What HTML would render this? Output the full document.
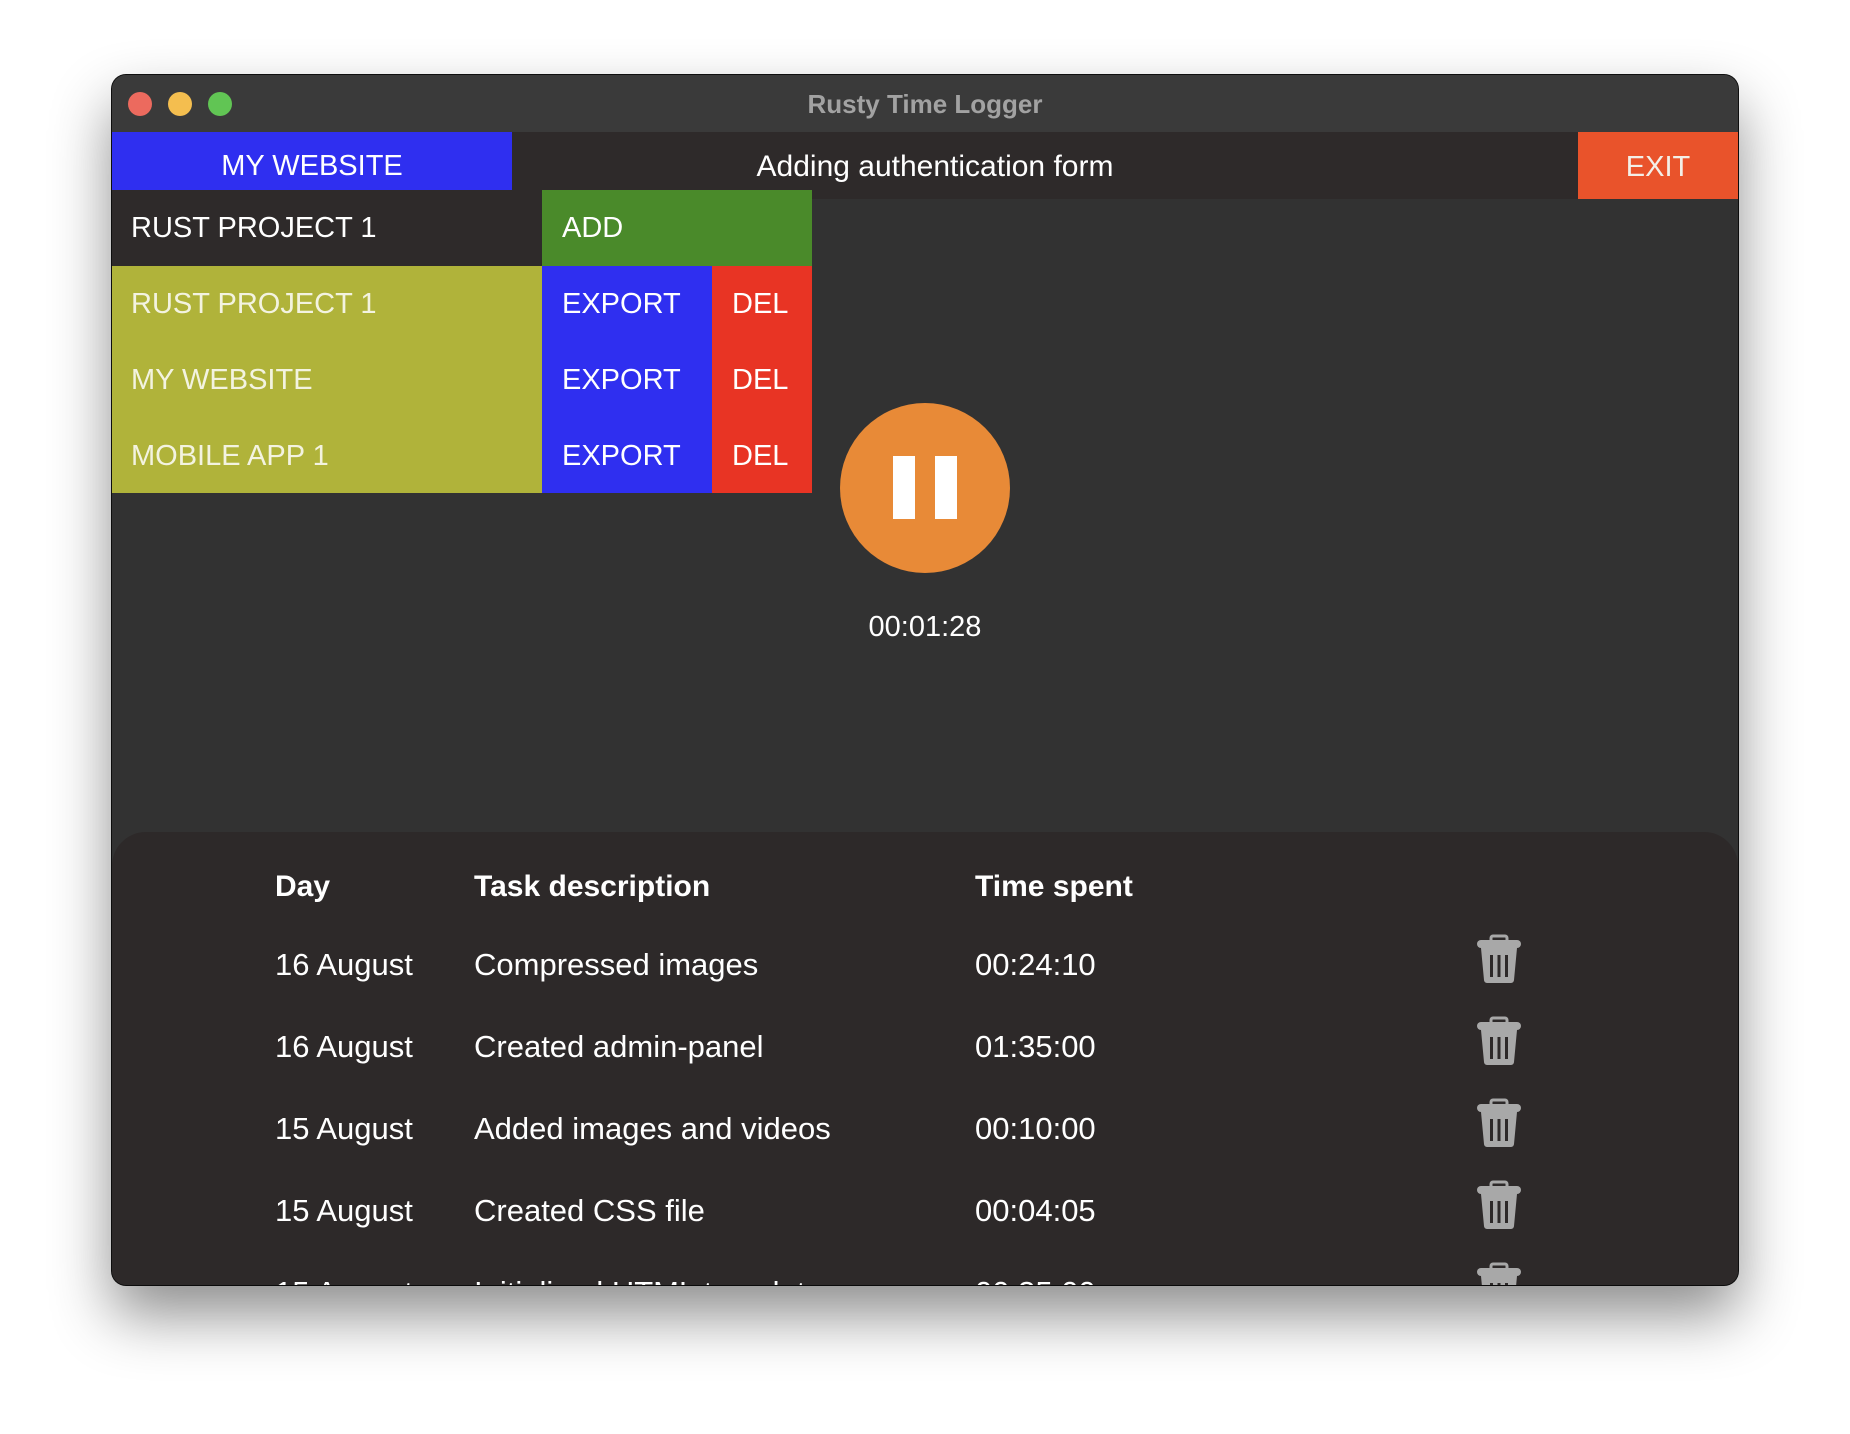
<!DOCTYPE html>
<html><head><meta charset="utf-8"><style>
*{margin:0;padding:0;box-sizing:border-box}
body{width:1850px;height:1434px;background:#fff;position:relative;overflow:hidden;font-family:"Liberation Sans",sans-serif}
.win{position:absolute;left:112px;top:75px;width:1626px;height:1210px;background:#323232;border-radius:14px;overflow:hidden;box-shadow:0 30px 60px rgba(0,0,0,.45),0 0 0 1px #111}
.a{position:absolute}
.t{position:absolute;color:#fff;white-space:nowrap;line-height:1}
.dot{position:absolute;width:24px;height:24px;border-radius:50%;top:17px}
.trash{position:absolute;left:1365px;width:44px;height:50px}
</style></head><body>
<div class="win">
 <div class="a" style="left:0;top:0;width:1626px;height:57px;background:#3a3a3a"></div>
 <div class="dot" style="left:16px;background:#ec6a5e"></div>
 <div class="dot" style="left:56px;background:#f4be4f"></div>
 <div class="dot" style="left:96px;background:#61c554"></div>
 <div class="t" style="left:0;width:1626px;text-align:center;top:16px;font-size:26px;font-weight:bold;color:#a2a2a2">Rusty Time Logger</div>

 <div class="a" style="left:0;top:57px;width:1626px;height:67px;background:#2e2a2a"></div>
 <div class="a" style="left:0;top:57px;width:400px;height:58px;background:#2f2ff0"></div>
 <div class="t" style="left:0;width:400px;text-align:center;top:77px;font-size:29px">MY WEBSITE</div>
 <div class="t" style="left:0;width:1646px;text-align:center;top:77px;font-size:30px">Adding authentication form</div>
 <div class="a" style="left:1466px;top:57px;width:160px;height:67px;background:#e9532b"></div>
 <div class="t" style="left:1466px;width:160px;text-align:center;top:78px;font-size:29px;color:#f3efe8">EXIT</div>

 <div class="a" style="left:0;top:115px;width:430px;height:76px;background:#2e2a2a"></div>
 <div class="t" style="left:19px;top:139px;font-size:29px">RUST PROJECT 1</div>
 <div class="a" style="left:430px;top:115px;width:270px;height:76px;background:#4a8a2a"></div>
 <div class="t" style="left:450px;top:139px;font-size:29px">ADD</div>

 <div class="a" style="left:0;top:191px;width:430px;height:227px;background:#b0b33a"></div>
 <div class="a" style="left:430px;top:191px;width:170px;height:227px;background:#2f2ff0"></div>
 <div class="a" style="left:600px;top:191px;width:100px;height:227px;background:#e83424"></div>
 <div class="t" style="left:19px;top:215px;font-size:29px;color:#f3f3e0">RUST PROJECT 1</div>
 <div class="t" style="left:19px;top:291px;font-size:29px;color:#f3f3e0">MY WEBSITE</div>
 <div class="t" style="left:19px;top:367px;font-size:29px;color:#f3f3e0">MOBILE APP 1</div>
 <div class="t" style="left:450px;top:215px;font-size:29px">EXPORT</div>
 <div class="t" style="left:450px;top:291px;font-size:29px">EXPORT</div>
 <div class="t" style="left:450px;top:367px;font-size:29px">EXPORT</div>
 <div class="t" style="left:620px;top:215px;font-size:29px">DEL</div>
 <div class="t" style="left:620px;top:291px;font-size:29px">DEL</div>
 <div class="t" style="left:620px;top:367px;font-size:29px">DEL</div>

 <div class="a" style="left:728px;top:328px;width:170px;height:170px;border-radius:50%;background:#e88a37"></div>
 <div class="a" style="left:781px;top:381px;width:22px;height:63px;background:#fff"></div>
 <div class="a" style="left:823px;top:381px;width:22px;height:63px;background:#fff"></div>
 <div class="t" style="left:713px;width:200px;text-align:center;top:538px;font-size:29px">00:01:28</div>

 <div class="a" style="left:0;top:757px;width:1626px;height:460px;background:#2d2929;border-radius:34px 34px 0 0"></div>
 <div class="t" style="left:163px;top:797px;font-size:30px;font-weight:bold">Day</div>
 <div class="t" style="left:362px;top:797px;font-size:30px;font-weight:bold">Task description</div>
 <div class="t" style="left:863px;top:797px;font-size:30px;font-weight:bold">Time spent</div>

 <div class="t" style="left:163px;top:874px;font-size:31px">16 August</div>
 <div class="t" style="left:362px;top:874px;font-size:31px">Compressed images</div>
 <div class="t" style="left:863px;top:874px;font-size:31px">00:24:10</div>
 <div class="t" style="left:163px;top:956px;font-size:31px">16 August</div>
 <div class="t" style="left:362px;top:956px;font-size:31px">Created admin-panel</div>
 <div class="t" style="left:863px;top:956px;font-size:31px">01:35:00</div>
 <div class="t" style="left:163px;top:1038px;font-size:31px">15 August</div>
 <div class="t" style="left:362px;top:1038px;font-size:31px">Added images and videos</div>
 <div class="t" style="left:863px;top:1038px;font-size:31px">00:10:00</div>
 <div class="t" style="left:163px;top:1120px;font-size:31px">15 August</div>
 <div class="t" style="left:362px;top:1120px;font-size:31px">Created CSS file</div>
 <div class="t" style="left:863px;top:1120px;font-size:31px">00:04:05</div>
 <div class="t" style="left:163px;top:1202px;font-size:31px">15 August</div>
 <div class="t" style="left:362px;top:1202px;font-size:31px">Initialized HTML template</div>
 <div class="t" style="left:863px;top:1202px;font-size:31px">00:35:00</div>

 <svg class="trash" style="top:859px" viewBox="0 0 44 50"><path d="M14 6v-2a2 2 0 0 1 2-2h12a2 2 0 0 1 2 2v2" fill="none" stroke="#a8a8a8" stroke-width="3"/><rect x="0" y="6" width="44" height="8" rx="4" fill="#a8a8a8"/><path d="M4 14h36l-3 32a3 3 0 0 1-3 3H10a3 3 0 0 1-3-3z" fill="#a8a8a8"/><rect x="13" y="21" width="3" height="22" fill="#2d2929"/><rect x="20.5" y="21" width="3" height="22" fill="#2d2929"/><rect x="28" y="21" width="3" height="22" fill="#2d2929"/></svg>
 <svg class="trash" style="top:941px" viewBox="0 0 44 50"><path d="M14 6v-2a2 2 0 0 1 2-2h12a2 2 0 0 1 2 2v2" fill="none" stroke="#a8a8a8" stroke-width="3"/><rect x="0" y="6" width="44" height="8" rx="4" fill="#a8a8a8"/><path d="M4 14h36l-3 32a3 3 0 0 1-3 3H10a3 3 0 0 1-3-3z" fill="#a8a8a8"/><rect x="13" y="21" width="3" height="22" fill="#2d2929"/><rect x="20.5" y="21" width="3" height="22" fill="#2d2929"/><rect x="28" y="21" width="3" height="22" fill="#2d2929"/></svg>
 <svg class="trash" style="top:1023px" viewBox="0 0 44 50"><path d="M14 6v-2a2 2 0 0 1 2-2h12a2 2 0 0 1 2 2v2" fill="none" stroke="#a8a8a8" stroke-width="3"/><rect x="0" y="6" width="44" height="8" rx="4" fill="#a8a8a8"/><path d="M4 14h36l-3 32a3 3 0 0 1-3 3H10a3 3 0 0 1-3-3z" fill="#a8a8a8"/><rect x="13" y="21" width="3" height="22" fill="#2d2929"/><rect x="20.5" y="21" width="3" height="22" fill="#2d2929"/><rect x="28" y="21" width="3" height="22" fill="#2d2929"/></svg>
 <svg class="trash" style="top:1105px" viewBox="0 0 44 50"><path d="M14 6v-2a2 2 0 0 1 2-2h12a2 2 0 0 1 2 2v2" fill="none" stroke="#a8a8a8" stroke-width="3"/><rect x="0" y="6" width="44" height="8" rx="4" fill="#a8a8a8"/><path d="M4 14h36l-3 32a3 3 0 0 1-3 3H10a3 3 0 0 1-3-3z" fill="#a8a8a8"/><rect x="13" y="21" width="3" height="22" fill="#2d2929"/><rect x="20.5" y="21" width="3" height="22" fill="#2d2929"/><rect x="28" y="21" width="3" height="22" fill="#2d2929"/></svg>
 <svg class="trash" style="top:1187px" viewBox="0 0 44 50"><path d="M14 6v-2a2 2 0 0 1 2-2h12a2 2 0 0 1 2 2v2" fill="none" stroke="#a8a8a8" stroke-width="3"/><rect x="0" y="6" width="44" height="8" rx="4" fill="#a8a8a8"/><path d="M4 14h36l-3 32a3 3 0 0 1-3 3H10a3 3 0 0 1-3-3z" fill="#a8a8a8"/><rect x="13" y="21" width="3" height="22" fill="#2d2929"/><rect x="20.5" y="21" width="3" height="22" fill="#2d2929"/><rect x="28" y="21" width="3" height="22" fill="#2d2929"/></svg>
</div>
</body></html>
